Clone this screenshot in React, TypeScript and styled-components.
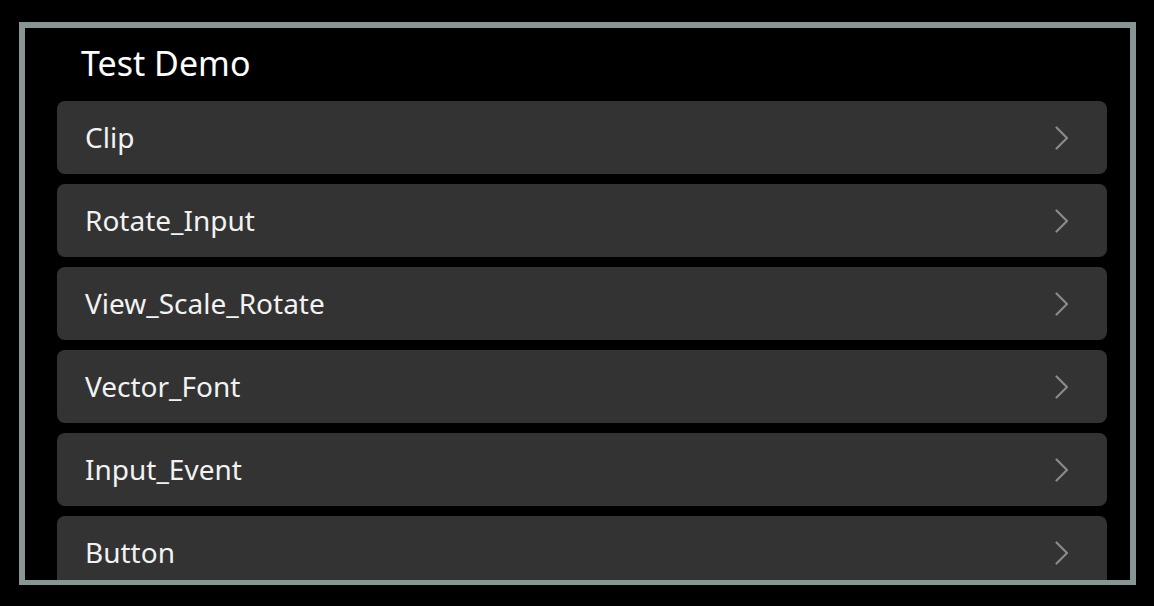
import React from "react";
import styled, { createGlobalStyle } from "styled-components";

const Global = createGlobalStyle`
  html, body { margin: 0; padding: 0; background: #000; }
  body { font-family: "Noto Sans", "DejaVu Sans", sans-serif; }
`;

const Page = styled.div`
  width: 1154px;
  height: 606px;
  padding: 22px 0 0 19px;
  box-sizing: border-box;
  background: #000;
`;

const Frame = styled.div`
  width: 1117px;
  height: 563px;
  box-sizing: border-box;
  border: 6px solid #879595;
  border-bottom-width: 5px;
  background: #000;
  overflow: hidden;
  display: flex;
  flex-direction: column;
`;

const Header = styled.div`
  height: 73px;
  flex: none;
  box-sizing: border-box;
  display: flex;
  align-items: center;
  padding: 0 0 3px 56px;
  color: #fff;
  font-size: 34px;
  line-height: 1;
`;

const List = styled.div`
  display: flex;
  flex-direction: column;
  gap: 10px;
  padding: 0 23px 0 32px;
`;

const Row = styled.div`
  height: 73px;
  flex: none;
  box-sizing: border-box;
  background: #333333;
  border-radius: 8px;
  display: flex;
  align-items: center;
  justify-content: space-between;
  padding: 0 38px 0 28px;
  color: #f2f2f2;
  font-size: 28px;
`;

const Label = styled.span`
  line-height: 1;
  padding-bottom: 2px;
`;

const Chevron = () => (
  <svg width="14" height="24" viewBox="0 0 14 24" fill="none">
    <path d="M1.5 1.5 L12 12 L1.5 22.5" stroke="#8a8a8a" strokeWidth="2.2" strokeLinecap="round" strokeLinejoin="round" />
  </svg>
);

const items = ["Clip", "Rotate_Input", "View_Scale_Rotate", "Vector_Font", "Input_Event", "Button"];

export default function App() {
  return (
    <>
      <Global />
      <Page>
        <Frame>
          <Header>Test Demo</Header>
          <List>
            {items.map((t) => (
              <Row key={t}>
                <Label>{t}</Label>
                <Chevron />
              </Row>
            ))}
          </List>
        </Frame>
      </Page>
    </>
  );
}
